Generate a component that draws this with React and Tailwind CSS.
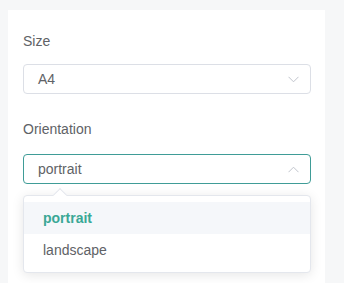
export default function App() {
  const font = { fontFamily: '"Liberation Sans", Arial, sans-serif' };
  return (
    <div className="w-[344px] h-[283px] overflow-hidden bg-[#f6f7f8] pt-[10px] pl-[8px]" style={font}>
      <div className="w-[317px] h-[300px] bg-white px-[15px] pt-[21px]">
        <div className="text-[14px] leading-[20px] text-[#606266]">Size</div>
        <div className="mt-[13px] h-[30px] w-[288px] rounded-[4px] border border-[#dcdfe6] flex items-center justify-between pl-[14px] pr-[11px]">
          <span className="text-[14px] text-[#606266]">A4</span>
          <svg width="11" height="7" viewBox="0 0 11 7" fill="none">
            <path d="M0.5 0.8 L5.5 5.8 L10.5 0.8" stroke="#c0c4cc" strokeWidth="1" />
          </svg>
        </div>
        <div className="mt-[25px] text-[14px] leading-[20px] text-[#606266]">Orientation</div>
        <div className="mt-[15px] h-[30px] w-[288px] rounded-[4px] border border-[#3f9c97] flex items-center justify-between pl-[14px] pr-[11px]">
          <span className="text-[14px] text-[#606266]">portrait</span>
          <svg width="11" height="7" viewBox="0 0 11 7" fill="none">
            <path d="M0.5 6.2 L5.5 1.2 L10.5 6.2" stroke="#c0c4cc" strokeWidth="1" />
          </svg>
        </div>
        <div className="relative mt-[11px] w-[288px] rounded-[4px] border border-[#e4e7ed] bg-white py-[6px] shadow-[0_2px_12px_0_rgba(0,0,0,0.1)]">
          <div className="absolute -top-[6px] left-[31px] w-[10px] h-[10px] rotate-45 bg-white border-l border-t border-[#e4e7ed]"></div>
          <div className="relative h-[32px] flex items-center pl-[19px] bg-[#f5f7fa] text-[14px] font-bold text-[#3aa896]">portrait</div>
          <div className="h-[32px] flex items-center pl-[19px] text-[14px] text-[#606266]">landscape</div>
        </div>
      </div>
    </div>
  );
}
